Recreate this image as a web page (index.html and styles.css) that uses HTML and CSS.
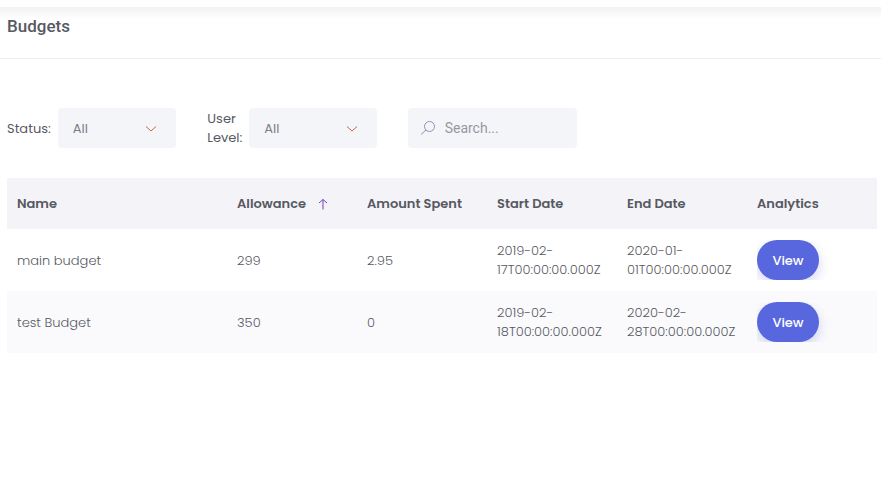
FILE: index.html
```
<!DOCTYPE html>
<html lang="en">
<head>
<meta charset="utf-8">
<title>Budgets</title>
<link rel="stylesheet" href="styles.css">
</head>
<body>
<header class="page-header">
  <h1 class="page-title">Budgets</h1>
</header>
<main class="content">
  <form class="filters">
    <div class="filter">
      <label class="filter-label" for="status">Status:</label>
      <div class="select-box">
        <select class="control" id="status"><option>All</option></select>
        <svg class="chevron" viewBox="0 0 12 8" aria-hidden="true"><path d="M1 1.500 6 6l5-4.500"/></svg>
      </div>
    </div>
    <div class="filter">
      <label class="filter-label" for="level">User Level:</label>
      <div class="select-box">
        <select class="control" id="level"><option>All</option></select>
        <svg class="chevron" viewBox="0 0 12 8" aria-hidden="true"><path d="M1 1.500 6 6l5-4.500"/></svg>
      </div>
    </div>
    <div class="search-box">
      <svg class="search-icon" viewBox="0 0 16 16" aria-hidden="true"><circle cx="9.500" cy="6.500" r="5"/><path d="M6 10 1 14.500"/></svg>
      <input class="control search-input" type="text" placeholder="Search..." aria-label="Search">
    </div>
  </form>
  <table class="budgets">
    <colgroup>
      <col class="col-name"><col class="col-data"><col class="col-data"><col class="col-data"><col class="col-data"><col>
    </colgroup>
    <thead>
      <tr>
        <th scope="col">Name</th>
        <th scope="col" aria-sort="ascending"><span class="sorted">Allowance<svg class="sort-icon" viewBox="0 0 10 12" aria-hidden="true"><path d="M5 11.500V1.500M1 5 5 1.500 9 5"/></svg></span></th>
        <th scope="col">Amount Spent</th>
        <th scope="col">Start Date</th>
        <th scope="col">End Date</th>
        <th scope="col">Analytics</th>
      </tr>
    </thead>
    <tbody>
      <tr>
        <td>main budget</td>
        <td>299</td>
        <td>2.95</td>
        <td>2019-02-<wbr>17T00:00:00.000Z</td>
        <td>2020-01-<wbr>01T00:00:00.000Z</td>
        <td><div class="action"><button class="view" type="button">View</button></div></td>
      </tr>
      <tr>
        <td>test Budget</td>
        <td>350</td>
        <td>0</td>
        <td>2019-02-<wbr>18T00:00:00.000Z</td>
        <td>2020-02-<wbr>28T00:00:00.000Z</td>
        <td><div class="action"><button class="view" type="button">View</button></div></td>
      </tr>
    </tbody>
  </table>
</main>
</body>
</html>
```
FILE: styles.css
```
* {
  box-sizing: border-box;
}

body {
  margin: 0;
  padding-top: 7px;
  background: #fff;
  color: #575962;
  font: 300 13px/19px Poppins, Inter, sans-serif;
}

.page-header {
  padding: 7px 7px 20px;
  border-bottom: 1px solid #ebedf2;
  background: linear-gradient(#f2f2f2, #fff 12px);
}

.page-title {
  margin: 0;
  font: 500 17px/24px Roboto, sans-serif;
}

.content {
  padding: 49px 4px 0 7px;
}

.filters {
  display: grid;
  grid-template-columns: repeat(3, 1fr);
  gap: 31px;
  max-width: 570px;
  margin-bottom: 30px;
}

.filter {
  display: flex;
  align-items: center;
  gap: 7px;
}

.filter-label {
  flex: 0 1 min-content;
  font-weight: 400;
}

.select-box,
.search-box {
  position: relative;
  flex: 1;
  min-width: 0;
}

.control {
  display: block;
  width: 100%;
  height: 40px;
  padding: 0 15px;
  border: 0;
  border-radius: 4px;
  background: #f4f5f8;
  color: #7b7e8a;
  font: inherit;
  font-weight: 400;
  appearance: none;
}

.chevron {
  position: absolute;
  top: 17px;
  right: 19px;
  width: 12px;
  height: 8px;
  fill: none;
  stroke: #c4694a;
  pointer-events: none;
}

.search-input {
  padding-left: 37px;
  font: 400 14px/20px Roboto, sans-serif;
}

.search-input::placeholder {
  color: #9699a2;
}

.search-icon {
  position: absolute;
  top: 12px;
  left: 12px;
  width: 16px;
  height: 16px;
  fill: none;
  stroke: #8f8fbc;
}

.budgets {
  width: 100%;
  table-layout: fixed;
  border-collapse: collapse;
}

.col-name {
  width: 220px;
}

.col-data {
  width: 130px;
}

.budgets th,
.budgets td {
  padding: 11px 10px;
  text-align: left;
  vertical-align: middle;
}

.budgets th {
  padding: 16px 10px;
  background: #f4f3f8;
  font-weight: 600;
  white-space: nowrap;
}

.sorted {
  display: flex;
  align-items: center;
  gap: 12px;
}

.sort-icon {
  width: 10px;
  height: 12px;
  fill: none;
  stroke: #7a3cc4;
}

.budgets tbody tr:nth-child(even) {
  background: #fafafc;
}

.action {
  overflow: hidden;
}

.view {
  display: block;
  min-width: 62px;
  height: 40px;
  padding: 0 15px;
  border: 0;
  border-radius: 20px;
  background: #5867dd;
  box-shadow: 0 5px 10px 2px rgba(88, 103, 221, 0.19);
  color: #fff;
  font: inherit;
  font-weight: 500;
}
```
